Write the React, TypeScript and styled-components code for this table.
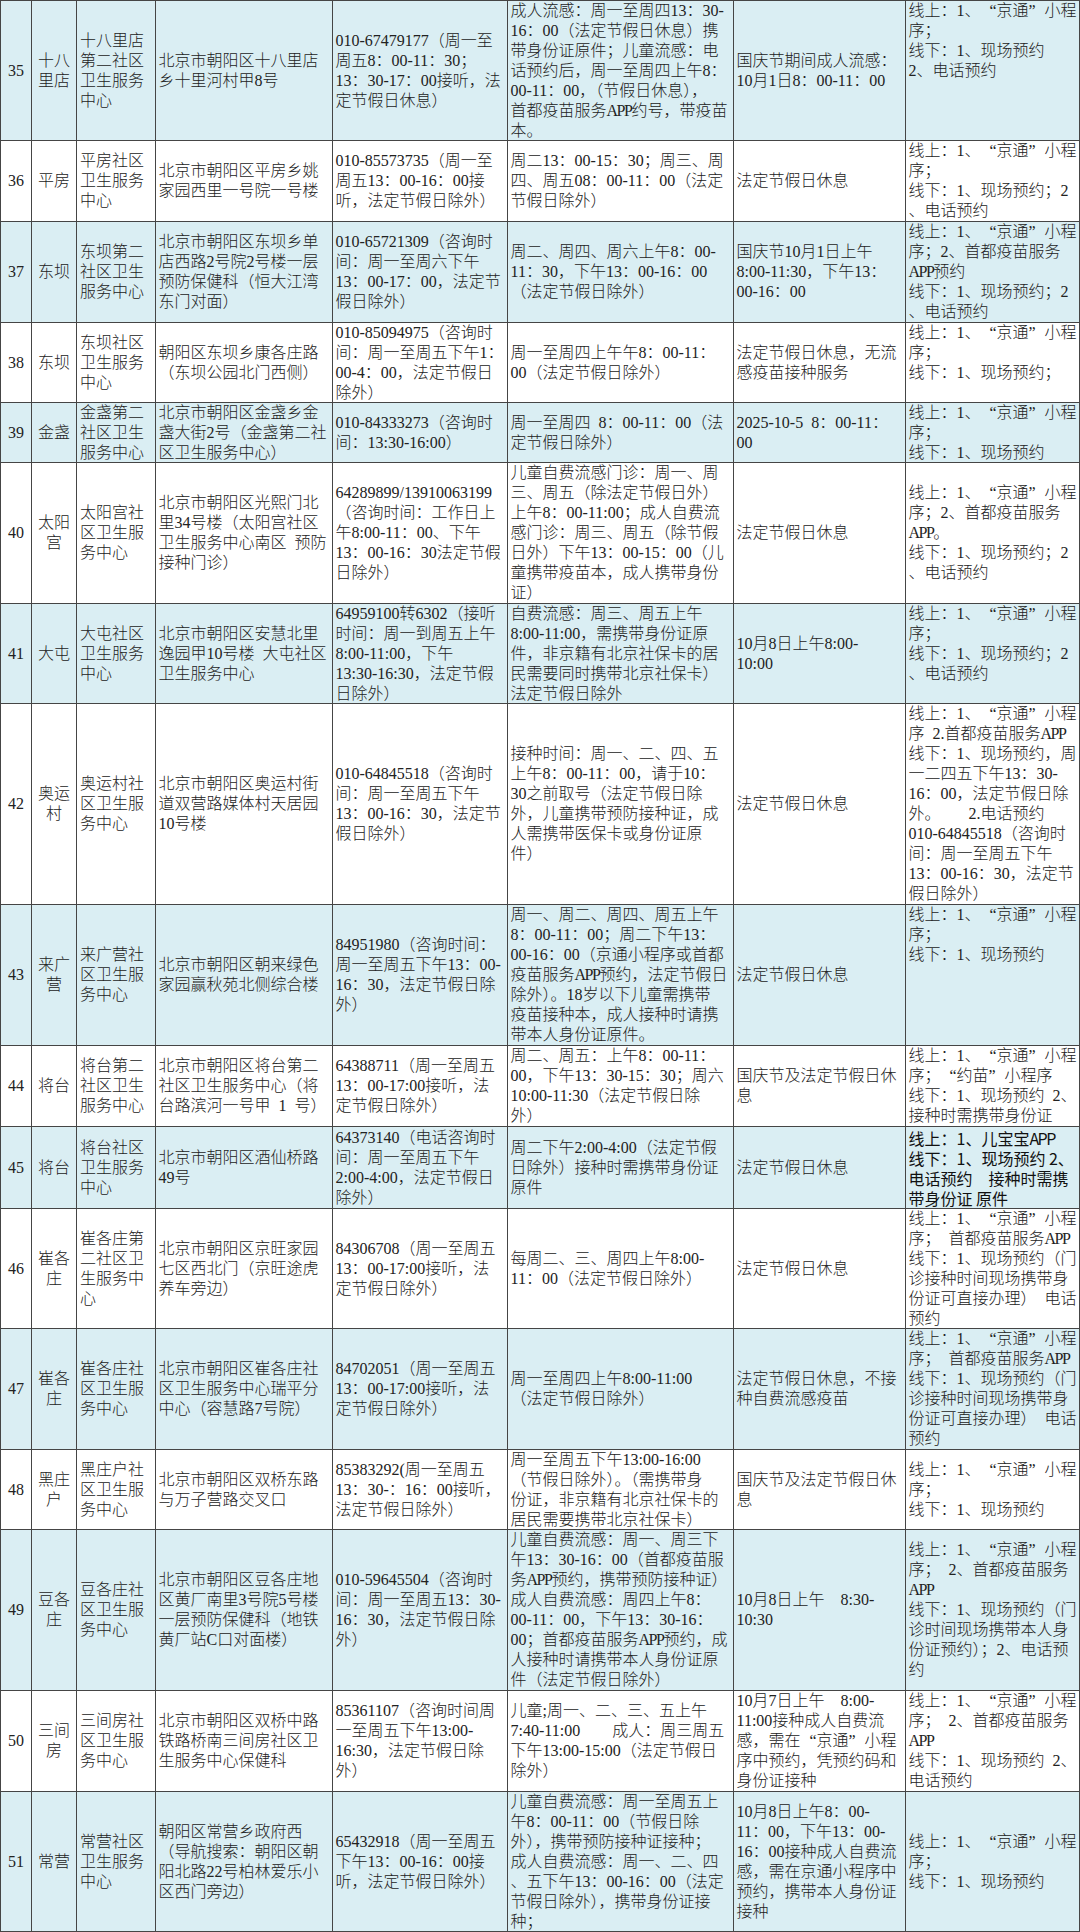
import React from "react";
import styled, { createGlobalStyle } from "styled-components";

const GlobalStyle = createGlobalStyle`
  html, body { margin: 0; padding: 0; background: #ffffff; }
  body { font-family: "Liberation Serif", "Noto Sans CJK SC", serif; }
`;

const Table = styled.div`
  width: 1080px;
  box-sizing: border-box;
  border-top: 1px solid #454545;
  border-left: 1px solid #454545;
  font-family: "Liberation Serif", "Noto Sans CJK SC", serif;
  font-size: 16px;
  line-height: 20px;
  font-weight: 300;
  color: #222;
`;

const Row = styled.div<{ $h: number; $shade: boolean }>`
  display: grid;
  grid-template-columns: 31px 45px 78.5px 177px 175px 226px 172px 1fr;
  height: ${(p) => p.$h}px;
  background: ${(p) => (p.$shade ? "#daeef3" : "#ffffff")};
`;

const Cell = styled.div<{ $center?: boolean; $top?: boolean; $sans?: boolean }>`
  box-sizing: border-box;
  min-width: 0;
  border-right: 1px solid #454545;
  border-bottom: 1px solid #454545;
  display: flex;
  flex-direction: column;
  justify-content: ${(p) => (p.$top ? "flex-start" : "safe center")};
  align-items: ${(p) => (p.$center ? "center" : "flex-start")};
  padding: 0 1px 0 ${(p) => (p.$center ? "1px" : "3px")};
  overflow: hidden;
  ${(p) =>
    p.$sans
      ? `font-family: "Noto Sans CJK SC", sans-serif; font-weight: 400; color: #111;`
      : ""}
`;

const Text = styled.div<{ $center?: boolean }>`
  white-space: pre;
  text-align: ${(p) => (p.$center ? "center" : "left")};
`;

const Q = styled.span<{ $open?: boolean }>`
  display: inline-block;
  width: 1em;
  text-align: ${(p) => (p.$open ? "right" : "left")};
`;

const Narrow = styled.span`
  letter-spacing: -1.5px;
`;

const renderText = (s: string) =>
  s.split(/([“”]|APP)/).map((part, i) =>
    part === "“" ? (
      <Q key={i} $open>
        “
      </Q>
    ) : part === "”" ? (
      <Q key={i}>”</Q>
    ) : part === "APP" ? (
      <Narrow key={i}>APP</Narrow>
    ) : (
      <React.Fragment key={i}>{part}</React.Fragment>
    )
  );

type RowData = {
  n: string;
  h: number;
  c: [string, string, string, string, string, string, string];
  top?: boolean;
  sans?: boolean;
};

const BK_JT = "线上：1、“京通”小程\n序；\n线下：1、现场预约";

const rows: RowData[] = [
  {
    n: "35",
    h: 140,
    top: true,
    c: [
      "十八\n里店",
      "十八里店\n第二社区\n卫生服务\n中心",
      "北京市朝阳区十八里店\n乡十里河村甲8号",
      "010-67479177（周一至\n周五8：00-11：30；\n13：30-17：00接听，法\n定节假日休息）",
      "成人流感：周一至周四13：30-\n16：00（法定节假日休息）携\n带身份证原件；儿童流感：电\n话预约后，周一至周四上午8：\n00-11：00，（节假日休息），\n首都疫苗服务APP约号，带疫苗\n本。",
      "国庆节期间成人流感：\n10月1日8：00-11：00",
      "线上：1、“京通”小程\n序；\n线下：1、现场预约\n2、电话预约",
    ],
  },
  {
    n: "36",
    h: 81,
    c: [
      "平房",
      "平房社区\n卫生服务\n中心",
      "北京市朝阳区平房乡姚\n家园西里一号院一号楼",
      "010-85573735（周一至\n周五13：00-16：00接\n听，法定节假日除外）",
      "周二13：00-15：30；周三、周\n四、周五08：00-11：00（法定\n节假日除外）",
      "法定节假日休息",
      "线上：1、“京通”小程\n序；\n线下：1、现场预约；2\n、电话预约",
    ],
  },
  {
    n: "37",
    h: 101,
    c: [
      "东坝",
      "东坝第二\n社区卫生\n服务中心",
      "北京市朝阳区东坝乡单\n店西路2号院2号楼一层\n预防保健科（恒大江湾\n东门对面）",
      "010-65721309（咨询时\n间：周一至周六下午\n13：00-17：00，法定节\n假日除外）",
      "周二、周四、周六上午8：00-\n11：30，下午13：00-16：00\n（法定节假日除外）",
      "国庆节10月1日上午\n8:00-11:30，下午13：\n00-16：00",
      "线上：1、“京通”小程\n序；2、首都疫苗服务\nAPP预约\n线下：1、现场预约；2\n、电话预约",
    ],
  },
  {
    n: "38",
    h: 80,
    top: true,
    c: [
      "东坝",
      "东坝社区\n卫生服务\n中心",
      "朝阳区东坝乡康各庄路\n（东坝公园北门西侧）",
      "010-85094975（咨询时\n间：周一至周五下午1：\n00-4：00，法定节假日\n除外）",
      "周一至周四上午午8：00-11：\n00（法定节假日除外）",
      "法定节假日休息，无流\n感疫苗接种服务",
      "线上：1、“京通”小程\n序；\n线下：1、现场预约；",
    ],
  },
  {
    n: "39",
    h: 60,
    c: [
      "金盏",
      "金盏第二\n社区卫生\n服务中心",
      "北京市朝阳区金盏乡金\n盏大街2号（金盏第二社\n区卫生服务中心）",
      "010-84333273（咨询时\n间：13:30-16:00）",
      "周一至周四  8：00-11：00（法\n定节假日除外）",
      "2025-10-5  8：00-11：\n00",
      BK_JT,
    ],
  },
  {
    n: "40",
    h: 141,
    c: [
      "太阳\n宫",
      "太阳宫社\n区卫生服\n务中心",
      "北京市朝阳区光熙门北\n里34号楼（太阳宫社区\n卫生服务中心南区  预防\n接种门诊）",
      "64289899/13910063199\n（咨询时间：工作日上\n午8:00-11：00、下午\n13：00-16：30法定节假\n日除外）",
      "儿童自费流感门诊：周一、周\n三、周五（除法定节假日外）\n上午8：00-11:00；成人自费流\n感门诊：周三、周五（除节假\n日外）下午13：00-15：00（儿\n童携带疫苗本，成人携带身份\n证）",
      "法定节假日休息",
      "线上：1、“京通”小程\n序；2、首都疫苗服务\nAPP。\n线下：1、现场预约；2\n、电话预约",
    ],
  },
  {
    n: "41",
    h: 100,
    top: true,
    c: [
      "大屯",
      "大屯社区\n卫生服务\n中心",
      "北京市朝阳区安慧北里\n逸园甲10号楼  大屯社区\n卫生服务中心",
      "64959100转6302（接听\n时间：周一到周五上午\n8:00-11:00，下午\n13:30-16:30，法定节假\n日除外）",
      "自费流感：周三、周五上午\n8:00-11:00，需携带身份证原\n件，非京籍有北京社保卡的居\n民需要同时携带北京社保卡）\n法定节假日除外",
      "10月8日上午8:00-\n10:00",
      "线上：1、“京通”小程\n序；\n线下：1、现场预约；2\n、电话预约",
    ],
  },
  {
    n: "42",
    h: 201,
    c: [
      "奥运\n村",
      "奥运村社\n区卫生服\n务中心",
      "北京市朝阳区奥运村街\n道双营路媒体村天居园\n10号楼",
      "010-64845518（咨询时\n间：周一至周五下午\n13：00-16：30，法定节\n假日除外）",
      "接种时间：周一、二、四、五\n上午8：00-11：00，请于10：\n30之前取号（法定节假日除\n外，儿童携带预防接种证，成\n人需携带医保卡或身份证原\n件）",
      "法定节假日休息",
      "线上：1、“京通”小程\n序  2.首都疫苗服务APP\n线下：1、现场预约，周\n一二四五下午13：30-\n16：00，法定节假日除\n外。\u3000\u3000 2.电话预约\n010-64845518（咨询时\n间：周一至周五下午\n13：00-16：30，法定节\n假日除外）",
    ],
  },
  {
    n: "43",
    h: 141,
    top: true,
    c: [
      "来广\n营",
      "来广营社\n区卫生服\n务中心",
      "北京市朝阳区朝来绿色\n家园赢秋苑北侧综合楼",
      "84951980（咨询时间：\n周一至周五下午13：00-\n16：30，法定节假日除\n外）",
      "周一、周二、周四、周五上午\n8：00-11：00；周二下午13：\n00-16：00（京通小程序或首都\n疫苗服务APP预约，法定节假日\n除外）。18岁以下儿童需携带\n疫苗接种本，成人接种时请携\n带本人身份证原件。",
      "法定节假日休息",
      BK_JT,
    ],
  },
  {
    n: "44",
    h: 81,
    c: [
      "将台",
      "将台第二\n社区卫生\n服务中心",
      "北京市朝阳区将台第二\n社区卫生服务中心（将\n台路滨河一号甲  1  号）",
      "64388711（周一至周五\n13：00-17:00接听，法\n定节假日除外）",
      "周二、周五：上午8：00-11：\n00，下午13：30-15：30；周六\n10:00-11:30（法定节假日除\n外）",
      "国庆节及法定节假日休\n息",
      "线上：1、“京通”小程\n序；“约苗”小程序\n线下：1、现场预约  2、\n接种时需携带身份证",
    ],
  },
  {
    n: "45",
    h: 82,
    sans: true,
    c: [
      "将台",
      "将台社区\n卫生服务\n中心",
      "北京市朝阳区酒仙桥路\n49号",
      "64373140（电话咨询时\n间：周一至周五下午\n2:00-4:00，法定节假日\n除外）",
      "周二下午2:00-4:00（法定节假\n日除外）接种时需携带身份证\n原件",
      "法定节假日休息",
      "线上：1、儿宝宝APP\n线下：1、现场预约 2、\n电话预约\u3000接种时需携\n带身份证 原件",
    ],
  },
  {
    n: "46",
    h: 120,
    c: [
      "崔各\n庄",
      "崔各庄第\n二社区卫\n生服务中\n心",
      "北京市朝阳区京旺家园\n七区西北门（京旺途虎\n养车旁边）",
      "84306708（周一至周五\n13：00-17:00接听，法\n定节假日除外）",
      "每周二、三、周四上午8:00-\n11：00（法定节假日除外）",
      "法定节假日休息",
      "线上：1、“京通”小程\n序；  首都疫苗服务APP\n线下：1、现场预约（门\n诊接种时间现场携带身\n份证可直接办理）  电话\n预约",
    ],
  },
  {
    n: "47",
    h: 121,
    c: [
      "崔各\n庄",
      "崔各庄社\n区卫生服\n务中心",
      "北京市朝阳区崔各庄社\n区卫生服务中心瑞平分\n中心（容慧路7号院）",
      "84702051（周一至周五\n13：00-17:00接听，法\n定节假日除外）",
      "周一至周四上午8:00-11:00\n（法定节假日除外）",
      "法定节假日休息，不接\n种自费流感疫苗",
      "线上：1、“京通”小程\n序；  首都疫苗服务APP\n线下：1、现场预约（门\n诊接种时间现场携带身\n份证可直接办理）  电话\n预约",
    ],
  },
  {
    n: "48",
    h: 80,
    c: [
      "黑庄\n户",
      "黑庄户社\n区卫生服\n务中心",
      "北京市朝阳区双桥东路\n与万子营路交叉口",
      "85383292(周一至周五\n13：30-：16：00接听，\n法定节假日除外）",
      "周一至周五下午13:00-16:00\n（节假日除外）。（需携带身\n份证，非京籍有北京社保卡的\n居民需要携带北京社保卡）",
      "国庆节及法定节假日休\n息",
      BK_JT,
    ],
  },
  {
    n: "49",
    h: 161,
    c: [
      "豆各\n庄",
      "豆各庄社\n区卫生服\n务中心",
      "北京市朝阳区豆各庄地\n区黄厂南里3号院5号楼\n一层预防保健科（地铁\n黄厂站C口对面楼）",
      "010-59645504（咨询时\n间：周一至周五13：30-\n16：30，法定节假日除\n外）",
      "儿童自费流感：周一、周三下\n午13：30-16：00（首都疫苗服\n务APP预约，携带预防接种证）\n成人自费流感：周四上午8：\n00-11：00，下午13：30-16：\n00；首都疫苗服务APP预约，成\n人接种时请携带本人身份证原\n件（法定节假日除外）",
      "10月8日上午    8:30-\n10:30",
      "线上：1、“京通”小程\n序；  2、首都疫苗服务\nAPP\n线下：1、现场预约（门\n诊时间现场携带本人身\n份证预约）；2、电话预\n约",
    ],
  },
  {
    n: "50",
    h: 101,
    c: [
      "三间\n房",
      "三间房社\n区卫生服\n务中心",
      "北京市朝阳区双桥中路\n铁路桥南三间房社区卫\n生服务中心保健科",
      "85361107（咨询时间周\n一至周五下午13:00-\n16:30，法定节假日除\n外）",
      "儿童;周一、二、三、五上午\n7:40-11:00\u3000\u3000成人：周三周五\n下午13:00-15:00（法定节假日\n除外）",
      "10月7日上午    8:00-\n11:00接种成人自费流\n感，需在“京通”小程\n序中预约，凭预约码和\n身份证接种",
      "线上：1、“京通”小程\n序；  2、首都疫苗服务\nAPP\n线下：1、现场预约  2、\n电话预约",
    ],
  },
  {
    n: "51",
    h: 140,
    c: [
      "常营",
      "常营社区\n卫生服务\n中心",
      "朝阳区常营乡政府西\n（导航搜索：朝阳区朝\n阳北路22号柏林爱乐小\n区西门旁边）",
      "65432918（周一至周五\n下午13：00-16：00接\n听，法定节假日除外）",
      "儿童自费流感：周一至周五上\n午8：00-11：00（节假日除\n外），携带预防接种证接种；\n成人自费流感：周一、二、四\n、五下午13：00-16：00（法定\n节假日除外），携带身份证接\n种；",
      "10月8日上午8：00-\n11：00，下午13：00-\n16：00接种成人自费流\n感，需在京通小程序中\n预约，携带本人身份证\n接种",
      BK_JT,
    ],
  },
];

export default function App() {
  return (
    <>
      <GlobalStyle />
      <Table>
        {rows.map((r, idx) => (
          <Row key={r.n} $h={r.h} $shade={idx % 2 === 0}>
            <Cell $center>
              <Text $center>{r.n}</Text>
            </Cell>
            <Cell $center>
              <Text $center>{r.c[0]}</Text>
            </Cell>
            {r.c.slice(1).map((txt, ci) => {
              const isBooking = ci === 5;
              return (
                <Cell
                  key={ci}
                  $top={isBooking && r.top}
                  $sans={isBooking && r.sans}
                >
                  <Text>{renderText(txt)}</Text>
                </Cell>
              );
            })}
          </Row>
        ))}
      </Table>
    </>
  );
}
